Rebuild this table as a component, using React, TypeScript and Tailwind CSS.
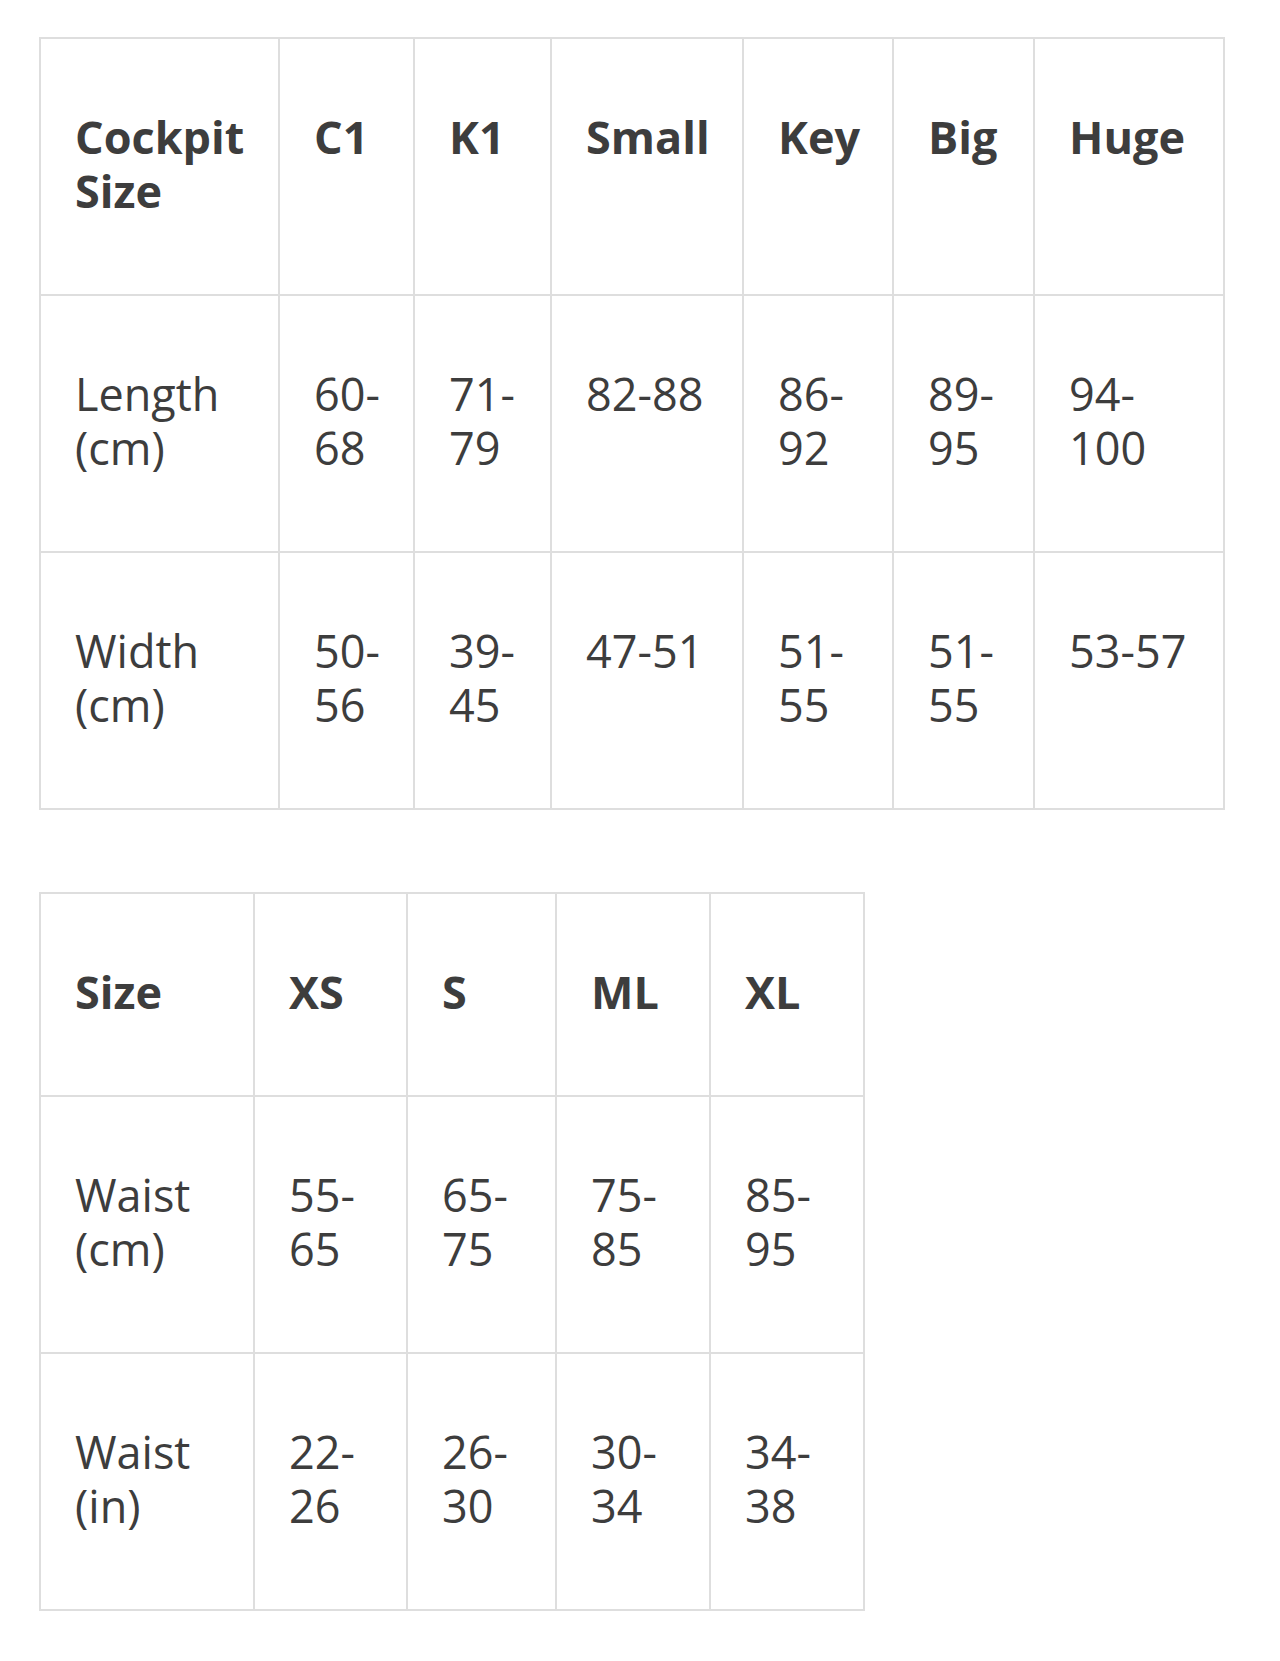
import React from "react";

type Table = {
  cols: string[];
  head: string[];
  rows: string[][];
};

const cockpit: Table = {
  cols: ["w-[239px]", "w-[135px]", "w-[137px]", "w-[192px]", "w-[150px]", "w-[141px]", "w-[190px]"],
  head: ["Cockpit Size", "C1", "K1", "Small", "Key", "Big", "Huge"],
  rows: [
    ["Length (cm)", "60-68", "71-79", "82-88", "86-92", "89-95", "94-100"],
    ["Width (cm)", "50-56", "39-45", "47-51", "51-55", "51-55", "53-57"],
  ],
};

const waist: Table = {
  cols: ["w-[214px]", "w-[153px]", "w-[149px]", "w-[154px]", "w-[154px]"],
  head: ["Size", "XS", "S", "ML", "XL"],
  rows: [
    ["Waist (cm)", "55-65", "65-75", "75-85", "85-95"],
    ["Waist (in)", "22-26", "26-30", "30-34", "34-38"],
  ],
};

const cell = "border-2 border-[#dedede] align-top text-left pl-[34px] pr-[27px] pt-[71px] pb-[76px]";

function SizeTable({ data, width }: { data: Table; width: string }) {
  return (
    <table className={`border-collapse table-fixed ${width}`}>
      <colgroup>
        {data.cols.map((c, i) => (
          <col key={i} className={c} />
        ))}
      </colgroup>
      <thead>
        <tr>
          {data.head.map((h) => (
            <th key={h} className={`${cell} font-bold`}>
              {h}
            </th>
          ))}
        </tr>
      </thead>
      <tbody>
        {data.rows.map((r, i) => (
          <tr key={i}>
            {r.map((v, j) => (
              <td key={j} className={`${cell} font-normal`}>
                {v}
              </td>
            ))}
          </tr>
        ))}
      </tbody>
    </table>
  );
}

export default function App() {
  return (
    <div
      className="min-h-screen bg-white pl-[39px] pt-[37px] pb-[48px] text-[45px] leading-[54px] text-[#3d3d3d]"
      style={{ fontFamily: '"Open Sans", "Noto Sans", sans-serif' }}
    >
      <div className="flex flex-col gap-[82px]">
        <SizeTable data={cockpit} width="w-[1186px]" />
        <SizeTable data={waist} width="w-[826px]" />
      </div>
    </div>
  );
}
